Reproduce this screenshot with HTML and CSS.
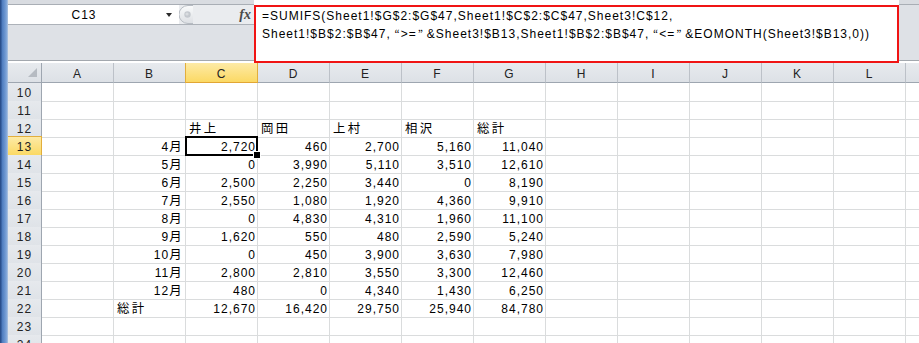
FILE: index.html
```html
<!DOCTYPE html>
<html lang="ja">
<head>
<meta charset="utf-8">
<title>Excel - SUMIFS</title>
<link rel="stylesheet" href="styles.css">
</head>
<body>
<div class="app">
  <div class="frame"></div>
  <div class="main">
    <div class="fbar">
      <div class="fleft">
        <div class="strip"></div>
        <div class="namerow">
          <div class="namebox">
            <span class="ref">C13</span>
            <span class="drop"><span class="tri"></span></span>
          </div>
          <svg class="grip" width="14" height="19" viewBox="0 0 14 19">
            <defs>
              <linearGradient id="gg" x1="0" y1="0" x2="0" y2="1">
                <stop offset="0" stop-color="#fafbfc"/>
                <stop offset="1" stop-color="#dcdfe3"/>
              </linearGradient>
            </defs>
            <path d="M14 0.5 H9 A8.5 8.5 0 0 0 9 18.5 H14" fill="url(#gg)" stroke="#b7bcc3"/>
            <circle cx="8.5" cy="9.5" r="3.2" fill="#c4c8ce"/>
            <circle cx="8" cy="9" r="1.6" fill="#d9dce0"/>
          </svg>
          <div class="fxarea"><span class="fx">fx</span></div>
        </div>
        <div class="fill"></div>
      </div>
      <div class="formula">
        <div>=SUMIFS(Sheet1!$G$2:$G$47,Sheet1!$C$2:$C$47,Sheet3!C$12,</div>
        <div>Sheet1!$B$2:$B$47,<span class="q qo">“</span>&gt;=<span class="q qc">”</span>&amp;Sheet3!$B13,Sheet1!$B$2:$B$47,<span class="q qo">“</span>&lt;=<span class="q qc">”</span>&amp;EOMONTH(Sheet3!$B13,0))</div>
      </div>
      <div class="fright">
        <div class="strip"></div>
        <div class="fill"></div>
      </div>
    </div>

    <div class="sheet">
      <div class="row head">
        <span class="corner"><span class="ctri"></span></span>
        <span>A</span><span>B</span><span class="sel-h">C</span><span>D</span><span>E</span><span>F</span><span>G</span><span>H</span><span>I</span><span>J</span><span>K</span><span>L</span><span></span>
      </div>
      <div class="row">
        <span class="rh">10</span>
        <span></span><span></span><span></span><span></span><span></span><span></span><span></span><span></span><span></span><span></span><span></span><span></span><span></span>
      </div>
      <div class="row">
        <span class="rh">11</span>
        <span></span><span></span><span></span><span></span><span></span><span></span><span></span><span></span><span></span><span></span><span></span><span></span><span></span>
      </div>
      <div class="row">
        <span class="rh">12</span>
        <span></span><span></span>
        <span><span class="j">井上</span></span>
        <span><span class="j">岡田</span></span>
        <span><span class="j">上村</span></span>
        <span><span class="j">相沢</span></span>
        <span><span class="j">総計</span></span>
        <span></span><span></span><span></span><span></span><span></span><span></span>
      </div>
      <div class="row">
        <span class="rh sel-r">13</span>
        <span></span>
        <span class="n">4<span class="j">月</span></span>
        <span class="n cur">2,720</span>
        <span class="n">460</span>
        <span class="n">2,700</span>
        <span class="n">5,160</span>
        <span class="n">11,040</span>
        <span></span><span></span><span></span><span></span><span></span><span></span>
      </div>
      <div class="row">
        <span class="rh">14</span>
        <span></span>
        <span class="n">5<span class="j">月</span></span>
        <span class="n">0</span>
        <span class="n">3,990</span>
        <span class="n">5,110</span>
        <span class="n">3,510</span>
        <span class="n">12,610</span>
        <span></span><span></span><span></span><span></span><span></span><span></span>
      </div>
      <div class="row">
        <span class="rh">15</span>
        <span></span>
        <span class="n">6<span class="j">月</span></span>
        <span class="n">2,500</span>
        <span class="n">2,250</span>
        <span class="n">3,440</span>
        <span class="n">0</span>
        <span class="n">8,190</span>
        <span></span><span></span><span></span><span></span><span></span><span></span>
      </div>
      <div class="row">
        <span class="rh">16</span>
        <span></span>
        <span class="n">7<span class="j">月</span></span>
        <span class="n">2,550</span>
        <span class="n">1,080</span>
        <span class="n">1,920</span>
        <span class="n">4,360</span>
        <span class="n">9,910</span>
        <span></span><span></span><span></span><span></span><span></span><span></span>
      </div>
      <div class="row">
        <span class="rh">17</span>
        <span></span>
        <span class="n">8<span class="j">月</span></span>
        <span class="n">0</span>
        <span class="n">4,830</span>
        <span class="n">4,310</span>
        <span class="n">1,960</span>
        <span class="n">11,100</span>
        <span></span><span></span><span></span><span></span><span></span><span></span>
      </div>
      <div class="row">
        <span class="rh">18</span>
        <span></span>
        <span class="n">9<span class="j">月</span></span>
        <span class="n">1,620</span>
        <span class="n">550</span>
        <span class="n">480</span>
        <span class="n">2,590</span>
        <span class="n">5,240</span>
        <span></span><span></span><span></span><span></span><span></span><span></span>
      </div>
      <div class="row">
        <span class="rh">19</span>
        <span></span>
        <span class="n">10<span class="j">月</span></span>
        <span class="n">0</span>
        <span class="n">450</span>
        <span class="n">3,900</span>
        <span class="n">3,630</span>
        <span class="n">7,980</span>
        <span></span><span></span><span></span><span></span><span></span><span></span>
      </div>
      <div class="row">
        <span class="rh">20</span>
        <span></span>
        <span class="n">11<span class="j">月</span></span>
        <span class="n">2,800</span>
        <span class="n">2,810</span>
        <span class="n">3,550</span>
        <span class="n">3,300</span>
        <span class="n">12,460</span>
        <span></span><span></span><span></span><span></span><span></span><span></span>
      </div>
      <div class="row">
        <span class="rh">21</span>
        <span></span>
        <span class="n">12<span class="j">月</span></span>
        <span class="n">480</span>
        <span class="n">0</span>
        <span class="n">4,340</span>
        <span class="n">1,430</span>
        <span class="n">6,250</span>
        <span></span><span></span><span></span><span></span><span></span><span></span>
      </div>
      <div class="row">
        <span class="rh">22</span>
        <span></span>
        <span><span class="j">総計</span></span>
        <span class="n">12,670</span>
        <span class="n">16,420</span>
        <span class="n">29,750</span>
        <span class="n">25,940</span>
        <span class="n">84,780</span>
        <span></span><span></span><span></span><span></span><span></span><span></span>
      </div>
      <div class="row">
        <span class="rh">23</span>
        <span></span><span></span><span></span><span></span><span></span><span></span><span></span><span></span><span></span><span></span><span></span><span></span><span></span>
      </div>
      <div class="row">
        <span class="rh">24</span>
        <span></span><span></span><span></span><span></span><span></span><span></span><span></span><span></span><span></span><span></span><span></span><span></span><span></span>
      </div>
    </div>
  </div>
</div>
</body>
</html>
```
FILE: styles.css
```css
* {
  box-sizing: border-box;
  margin: 0;
  padding: 0;
}

html,
body {
  width: 919px;
  height: 343px;
  overflow: hidden;
  background: #ffffff;
}

body {
  font-family: "Liberation Sans", "Noto Sans CJK JP", sans-serif;
  font-size: 12px;
  letter-spacing: 1px;
  color: #000000;
}

.app {
  display: flex;
  height: 343px;
}

/* window frame edge */
.frame {
  width: 8px;
  flex: none;
  background: linear-gradient(to right, #2a4f8c 0, #2a4f8c 1px, #4c7abd 2px, #6b95d0 5px, #88abdb 7px, #b9cbe2 8px);
}

.main {
  flex: 1;
  min-width: 0;
  display: flex;
  flex-direction: column;
}

/* formula bar */
.fbar {
  display: flex;
  height: 63px;
  flex: none;
}

.fleft {
  width: 246px;
  flex: none;
  display: flex;
  flex-direction: column;
  background: #ffffff;
  padding-bottom: 2px;
}

.fright {
  flex: 1;
  display: flex;
  flex-direction: column;
  background: #ffffff;
  padding-bottom: 2px;
}

.strip {
  height: 5px;
  flex: none;
  background: #d9dce1;
  border-bottom: 1px solid #a9aeb5;
}

.namerow {
  height: 20px;
  flex: none;
  display: flex;
  background: #eaecef;
  border-bottom: 1px solid #adb2b9;
}

.namebox {
  width: 171px;
  flex: none;
  display: flex;
  background: #ffffff;
}

.ref {
  flex: 1;
  text-align: center;
  line-height: 19px;
  padding-top: 1px;
  padding-left: 2px;
}

.drop {
  width: 21px;
  flex: none;
  display: flex;
  align-items: center;
  padding-left: 8px;
}

.tri {
  width: 0;
  height: 0;
  border-left: 3px solid transparent;
  border-right: 3px solid transparent;
  border-top: 4px solid #2b2b2b;
  margin-top: 1px;
}

.grip {
  display: block;
  flex: none;
}

.fxarea {
  flex: 1;
  display: flex;
  justify-content: flex-end;
  align-items: center;
  padding-right: 3px;
}

.fx {
  font-family: "Liberation Serif", serif;
  font-style: italic;
  font-weight: bold;
  font-size: 14px;
  letter-spacing: 0;
  color: #4a4a4a;
}

.fill {
  flex: 1;
  background: #dee1e6;
  border-bottom: 1px solid #a3a8ae;
}

.formula {
  width: 645px;
  height: 58px;
  flex: none;
  margin-top: 5px;
  border: 2px solid #f01414;
  background: #ffffff;
  padding: 1px 0 0 6px;
  line-height: 17.5px;
  white-space: nowrap;
}

.q {
  display: inline-block;
  width: 10px;
  font-family: "Noto Sans CJK JP", sans-serif;
  font-size: 11px;
  line-height: 0;
  letter-spacing: 0;
}

.qo {
  text-align: right;
  padding-right: 1px;
}

.qc {
  text-align: left;
  padding-left: 1px;
}

/* sheet grid */
.sheet {
  flex: 1;
  overflow: hidden;
}

.row {
  display: grid;
  grid-template-columns: 34px repeat(13, 72px);
  height: 18px;
}

.row > span {
  display: block;
  border-right: 1px solid #dadcdd;
  border-bottom: 1px solid #dadcdd;
  padding: 2px 1px 0 3px;
  line-height: 16px;
  white-space: nowrap;
}

.row > .rh {
  background: linear-gradient(#e6e9ed, #dfe3e8);
  border-right-color: #9ea6b0;
  border-bottom-color: #c3c8cf;
  text-align: center;
  padding: 2px 0 0;
  color: #222222;
}

.head {
  height: 20px;
}

.head > span {
  background: linear-gradient(#e7eaee, #dde1e6);
  border-right-color: #bcc1c8;
  border-bottom-color: #9ea6b0;
  text-align: center;
  padding: 4px 0 0;
  line-height: 15px;
  color: #222222;
}

.head > .corner {
  display: flex;
  justify-content: flex-end;
  align-items: flex-end;
  padding: 0 4px 5px 0;
  border-right-color: #9ea6b0;
}

.ctri {
  width: 0;
  height: 0;
  border-left: 9px solid transparent;
  border-bottom: 9px solid #b6bbc2;
}

.head > .sel-h {
  background: linear-gradient(#fdeaa6, #fbd964);
  border-right-color: #e2ae3c;
  border-bottom-color: #e2a634;
  box-shadow: -1px 0 0 #e2ae3c;
}

.row > .sel-r {
  background: linear-gradient(#fdeaa6, #fbd964);
  border-bottom-color: #e2a634;
  border-right-color: #e2ae3c;
  box-shadow: 0 -1px 0 #e2ae3c;
}

.n {
  text-align: right;
}

.j {
  font-family: "Noto Sans CJK JP", sans-serif;
  font-size: 12.4px;
  letter-spacing: 2.4px;
  line-height: 0;
}

/* active cell */
.row > .cur {
  position: relative;
}

.cur::before {
  content: "";
  position: absolute;
  left: -1px;
  top: -1px;
  right: -1px;
  bottom: -1px;
  border: 2px solid #000000;
}

.cur::after {
  content: "";
  position: absolute;
  left: 67px;
  top: 14px;
  width: 6px;
  height: 6px;
  background: #000000;
  border: 1px solid #ffffff;
}
```
